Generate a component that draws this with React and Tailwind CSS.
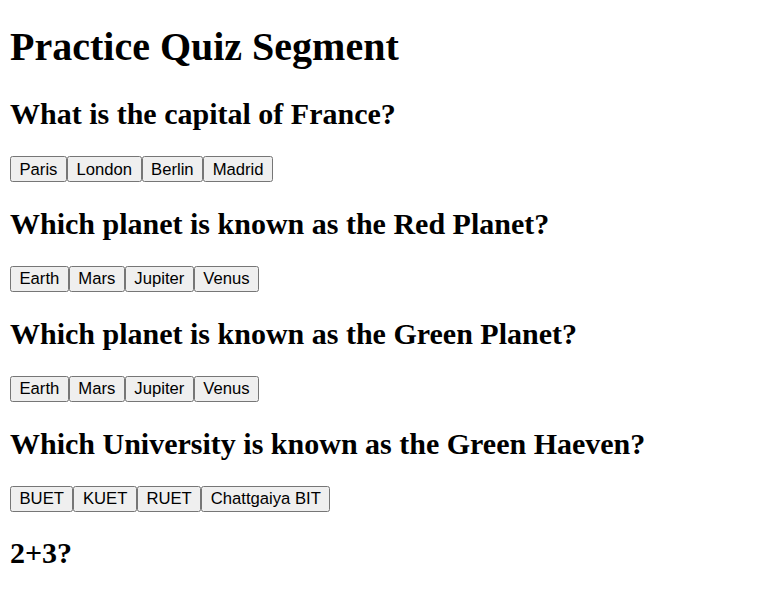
import React from "react";

const questions = [
  { q: "What is the capital of France?", options: ["Paris", "London", "Berlin", "Madrid"] },
  { q: "Which planet is known as the Red Planet?", options: ["Earth", "Mars", "Jupiter", "Venus"] },
  { q: "Which planet is known as the Green Planet?", options: ["Earth", "Mars", "Jupiter", "Venus"] },
  { q: "Which University is known as the Green Haeven?", options: ["BUET", "KUET", "RUET", "Chattgaiya BIT"] },
  { q: "2+3?", options: [] },
];

const Question = ({ item }) => {
  return (
    <div>
      <h2 className="text-[30px] leading-[34.5px] font-bold my-[24.9px]">{item.q}</h2>
      {item.options.length > 0 && (
        <div className="flex">
          {item.options.map((opt) => (
            <button
              key={opt}
              className="border border-[#767676] bg-[#efefef] rounded-[2.5px] px-[8.5px] py-[2.2px] text-[16.67px] leading-[19.2px] text-black font-['Liberation_Sans',Arial,sans-serif]"
            >
              {opt}
            </button>
          ))}
        </div>
      )}
    </div>
  );
};

export default function App() {
  return (
    <div className="px-[10px] pt-[24px] bg-white text-black font-['Liberation_Serif','Times_New_Roman',serif]">
      <h1 className="text-[40px] leading-[46px] font-bold mb-[27px]">Practice Quiz Segment</h1>
      {questions.map((item, idx) => (
        <Question key={idx} item={item} />
      ))}
    </div>
  );
}
